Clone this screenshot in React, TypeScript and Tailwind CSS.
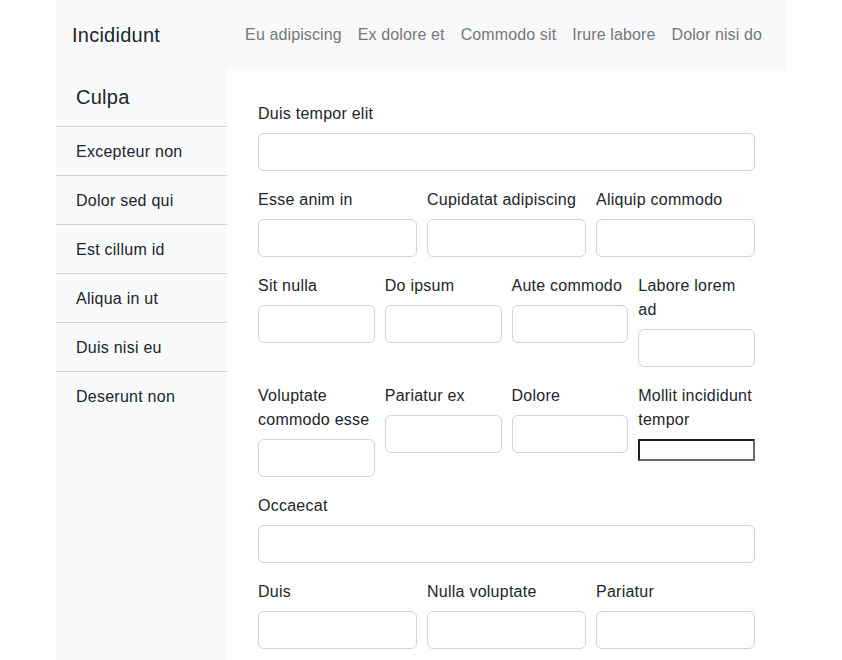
import React from "react";

const navLinks = ["Eu adipiscing", "Ex dolore et", "Commodo sit", "Irure labore", "Dolor nisi do"];
const sideItems = ["Excepteur non", "Dolor sed qui", "Est cillum id", "Aliqua in ut", "Duis nisi eu", "Deserunt non"];

const inputCls = "block w-full h-[38px] rounded-[6px] border border-[#ced4da] bg-white";

function Field({ label, plain }: { label: string; plain?: boolean }) {
  return (
    <div>
      <label className="block pt-px mb-[7px] leading-6">{label}</label>
      {plain ? (
        <input type="text" className="block mt-px w-full h-[22px] border-2 border-t-[#1f1f1f] border-l-[#1f1f1f] border-b-[#6b6b6b] border-r-[#6b6b6b] bg-white" />
      ) : (
        <input type="text" className={inputCls} />
      )}
    </div>
  );
}

export default function App() {
  return (
    <div className="w-[730px] mx-auto text-[16px] leading-6 tracking-[0.25px] text-[#212529] font-['Helvetica_Neue','Liberation_Sans',Arial,sans-serif]">
      <nav className="h-[69px] bg-[#f8f9fa] flex items-center px-4">
        <span className="text-[20px] leading-[30px]">Incididunt</span>
        <div className="flex ml-auto tracking-[0.12px]">
          {navLinks.map((l) => (
            <a key={l} className="px-2 text-[#777]">
              {l}
            </a>
          ))}
        </div>
      </nav>

      <div className="flex">
        <aside className="w-[171px] shrink-0 bg-[#f8f9fa] min-h-[591px]">
          <div className="h-[58px] px-5 pt-[16px] text-[20px] leading-6 border-b border-[#cfd2d6]">Culpa</div>
          {sideItems.map((s, i) => (
            <div
              key={s}
              className={
                "h-[49px] px-5 pt-[13px] " + (i < sideItems.length - 1 ? "border-b border-[#cfd2d6]" : "")
              }
            >
              {s}
            </div>
          ))}
        </aside>

        <main className="flex-1 bg-white px-[31px] pt-8 flex flex-col gap-4">
          <Field label="Duis tempor elit" />
          <div className="grid grid-cols-3 gap-[10px]">
            <Field label="Esse anim in" />
            <Field label="Cupidatat adipiscing" />
            <Field label="Aliquip commodo" />
          </div>
          <div className="grid grid-cols-4 gap-[10px] items-start">
            <Field label="Sit nulla" />
            <Field label="Do ipsum" />
            <Field label="Aute commodo" />
            <Field label="Labore lorem ad" />
          </div>
          <div className="grid grid-cols-4 gap-[10px] items-start">
            <Field label="Voluptate commodo esse" />
            <Field label="Pariatur ex" />
            <Field label="Dolore" />
            <Field label="Mollit incididunt tempor" plain />
          </div>
          <Field label="Occaecat" />
          <div className="grid grid-cols-3 gap-[10px]">
            <Field label="Duis" />
            <Field label="Nulla voluptate" />
            <Field label="Pariatur" />
          </div>
        </main>
      </div>
    </div>
  );
}
